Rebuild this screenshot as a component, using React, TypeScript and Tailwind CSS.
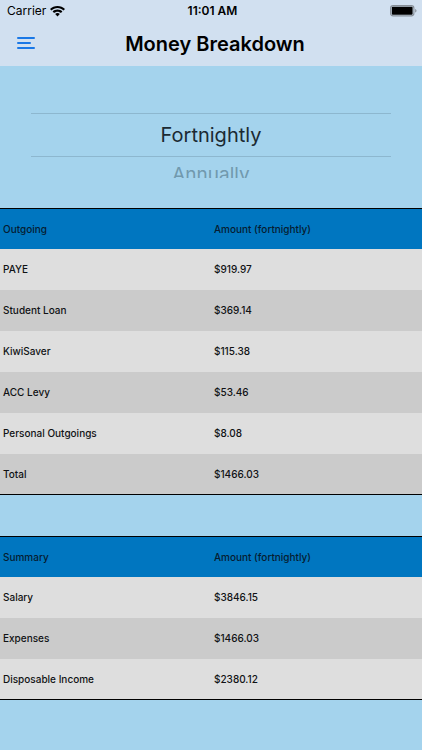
import { useState } from 'react';

const periods = ['Fortnightly', 'Annually'];

const outgoings = [
  { label: 'PAYE', amount: '$919.97' },
  { label: 'Student Loan', amount: '$369.14' },
  { label: 'KiwiSaver', amount: '$115.38' },
  { label: 'ACC Levy', amount: '$53.46' },
  { label: 'Personal Outgoings', amount: '$8.08' },
  { label: 'Total', amount: '$1466.03' },
];

const summary = [
  { label: 'Salary', amount: '$3846.15' },
  { label: 'Expenses', amount: '$1466.03' },
  { label: 'Disposable Income', amount: '$2380.12' },
];

function StatusBar() {
  return (
    <div className="grid grid-cols-3 items-center h-[22px] pl-[7px] pr-1 text-xs">
      <div className="flex items-center gap-1">
        <span>Carrier</span>
        <svg width="15" height="11" viewBox="0 0 15 11" aria-hidden="true">
          <path d="M7.5 0C4.6 0 2 1.1 0 2.9l1.5 1.6C3.1 3 5.2 2.1 7.5 2.1s4.4.9 6 2.4L15 2.9C13 1.1 10.4 0 7.5 0z" />
          <path d="M7.5 3.6c-1.9 0-3.6.7-4.9 1.9l1.5 1.6c.9-.8 2.1-1.4 3.4-1.4s2.5.6 3.4 1.4l1.5-1.6c-1.3-1.2-3-1.9-4.9-1.9z" />
          <path d="M7.5 7.1c-.9 0-1.7.3-2.3.9l2.3 2.5L9.8 8c-.6-.6-1.4-.9-2.3-.9z" />
        </svg>
      </div>
      <span className="text-center font-semibold">11:01 AM</span>
      <svg className="justify-self-end" width="28" height="12" viewBox="0 0 28 12" aria-hidden="true">
        <rect x="0.6" y="0.6" width="23.3" height="10.3" rx="2.6" fill="none" stroke="#868e97" strokeWidth="1.1" />
        <rect x="1.8" y="1.8" width="20.8" height="7.9" rx="1" />
        <path d="M25.2 4v3.6c.8-.3 1.3-1 1.3-1.8s-.5-1.5-1.3-1.8z" fill="#868e97" />
      </svg>
    </div>
  );
}

function Header() {
  return (
    <header className="bg-[#d1e0f0]">
      <StatusBar />
      <div className="grid grid-cols-[44px_1fr_36px] items-center h-11 px-1">
        <button type="button" aria-label="Menu" className="flex items-center justify-center h-11 w-11">
          <svg width="18" height="14" viewBox="0 0 18 14" fill="none" stroke="#1a78e6" strokeWidth="2" strokeLinecap="round" aria-hidden="true">
            <path d="M1 1h16M1 6h12M1 11h16" />
          </svg>
        </button>
        <h1 className="text-center text-xl font-semibold">Money Breakdown</h1>
      </div>
    </header>
  );
}

type PickerProps = {
  selected: string;
  onSelect: (period: string) => void;
};

function PeriodPicker({ selected, onSelect }: PickerProps) {
  return (
    <div role="listbox" aria-label="Period" className="flex flex-col h-28 pt-[47px] px-[31px] overflow-hidden">
      {periods.map((period) => (
        <button
          key={period}
          type="button"
          role="option"
          aria-selected={period === selected}
          onClick={() => onSelect(period)}
          className={
            period === selected
              ? 'shrink-0 h-11 border-y border-[#8db7cf] text-xl text-[#1b2a33]'
              : 'shrink-0 h-9 text-[19px] text-[#7199ae]'
          }
        >
          {period}
        </button>
      ))}
    </div>
  );
}

type TableProps = {
  title: string;
  period: string;
  rows: { label: string; amount: string }[];
};

function MoneyTable({ title, period, rows }: TableProps) {
  return (
    <table className="w-full table-fixed border-separate border-spacing-0 text-left text-[10px] font-medium text-[#101214]">
      <thead>
        <tr className="bg-[#0076c0] text-[#061c30]">
          <th className="h-[41px] border-t border-black px-[3px] font-medium">{title}</th>
          <th className="h-[41px] border-t border-black px-[3px] font-medium">Amount ({period.toLowerCase()})</th>
        </tr>
      </thead>
      <tbody className="[&>tr:last-child>td]:border-b">
        {rows.map((row) => (
          <tr key={row.label} className="bg-[#dedede] even:bg-[#cbcbcb]">
            <td className="h-[41px] border-black px-[3px]">{row.label}</td>
            <td className="h-[41px] border-black px-[3px]">{row.amount}</td>
          </tr>
        ))}
      </tbody>
    </table>
  );
}

export default function App() {
  const [period, setPeriod] = useState('Fortnightly');

  return (
    <div className="min-h-screen bg-[#a4d3ed] text-black font-['Inter',sans-serif]">
      <Header />
      <main>
        <PeriodPicker selected={period} onSelect={setPeriod} />
        <div className="flex flex-col gap-[41px] pt-[30px] pb-12">
          <MoneyTable title="Outgoing" period={period} rows={outgoings} />
          <MoneyTable title="Summary" period={period} rows={summary} />
        </div>
      </main>
    </div>
  );
}
